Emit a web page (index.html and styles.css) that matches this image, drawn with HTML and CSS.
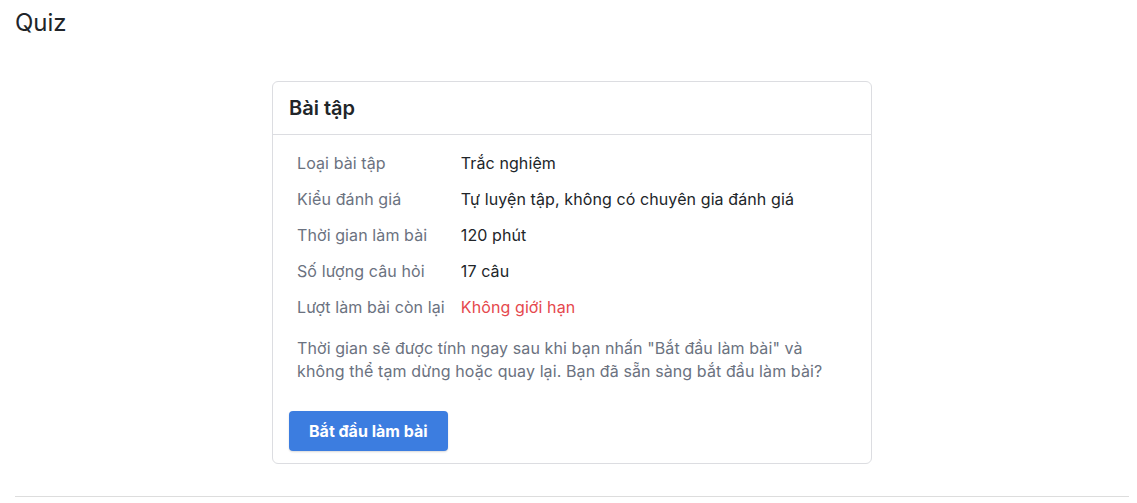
FILE: index.html
```html
<!DOCTYPE html>
<html lang="vi">
<head>
    <meta charset="UTF-8">
    <meta name="viewport" content="width=device-width, initial-scale=1.0">
    <title>Quiz</title>
    <link rel="stylesheet" href="styles.css">
</head>
<body>
    <div class="page">
        <h1 class="page-title">Quiz</h1>

        <!-- Thẻ thông tin bài tập -->
        <div class="quiz-card">
            <div class="card-header">
                <h2>Bài tập</h2>
            </div>
            <div class="card-body">
                <table class="info-table">
                    <tr>
                        <td class="info-label">Loại bài tập</td>
                        <td class="info-value">Trắc nghiệm</td>
                    </tr>
                    <tr>
                        <td class="info-label">Kiểu đánh giá</td>
                        <td class="info-value">Tự luyện tập, không có chuyên gia đánh giá</td>
                    </tr>
                    <tr>
                        <td class="info-label">Thời gian làm bài</td>
                        <td class="info-value">120 phút</td>
                    </tr>
                    <tr>
                        <td class="info-label">Số lượng câu hỏi</td>
                        <td class="info-value">17 câu</td>
                    </tr>
                    <tr>
                        <td class="info-label">Lượt làm bài còn lại</td>
                        <td class="info-value unlimited">Không giới hạn</td>
                    </tr>
                </table>

                <p class="notice">Thời gian sẽ được tính ngay sau khi bạn nhấn "Bắt đầu làm bài" và không thể tạm dừng hoặc quay lại. Bạn đã sẵn sàng bắt đầu làm bài?</p>

                <button class="start-btn">Bắt đầu làm bài</button>
            </div>
        </div>

        <hr class="divider">
    </div>
</body>
</html>
```

FILE: styles.css
```css
* {
    margin: 0;
    padding: 0;
    box-sizing: border-box;
    font-family: Inter, 'Noto Sans', sans-serif;
}

body {
    background-color: #ffffff;
    color: #212529;
}

.page {
    padding: 9px 0 0;
}

.page-title {
    font-size: 24px;
    font-weight: 400;
    line-height: 28px;
    margin-left: 15px;
    color: #212529;
}

.quiz-card {
    width: 600px;
    margin: 44px 0 0 272px;
    border: 1px solid #dcdde1;
    border-radius: 6px;
    background-color: white;
}

.card-header {
    padding: 12px 16px;
    border-bottom: 1px solid #dcdde1;
}

.card-header h2 {
    font-size: 20px;
    font-weight: 600;
    line-height: 28px;
    color: #212529;
}

.card-body {
    padding: 10px 16px 12px;
}

.info-table {
    border-collapse: collapse;
    font-size: 16px;
    letter-spacing: 0.1px;
}

.info-table td {
    padding: 6px 8px;
    line-height: 24px;
    white-space: nowrap;
}

.info-label {
    color: #6b7280;
}

.info-value {
    color: #212529;
}

.unlimited {
    color: #e5484d !important;
}

.notice {
    margin-top: 12px;
    padding: 0 8px;
    font-size: 16px;
    line-height: 23px;
    letter-spacing: 0.1px;
    color: #6b7280;
}

.start-btn {
    margin-top: 28px;
    height: 40px;
    padding: 0 20px;
    background-color: #3c7de0;
    color: white;
    border: none;
    border-radius: 4px;
    font-size: 16px;
    font-weight: 700;
    cursor: pointer;
    box-shadow: 0 1px 2px rgba(0,0,0,0.15);
}

.start-btn:hover {
    background-color: #2f6cc9;
}

.divider {
    margin: 32px 8px 0 15px;
    border: none;
    border-top: 1px solid #dddddd;
}
```
